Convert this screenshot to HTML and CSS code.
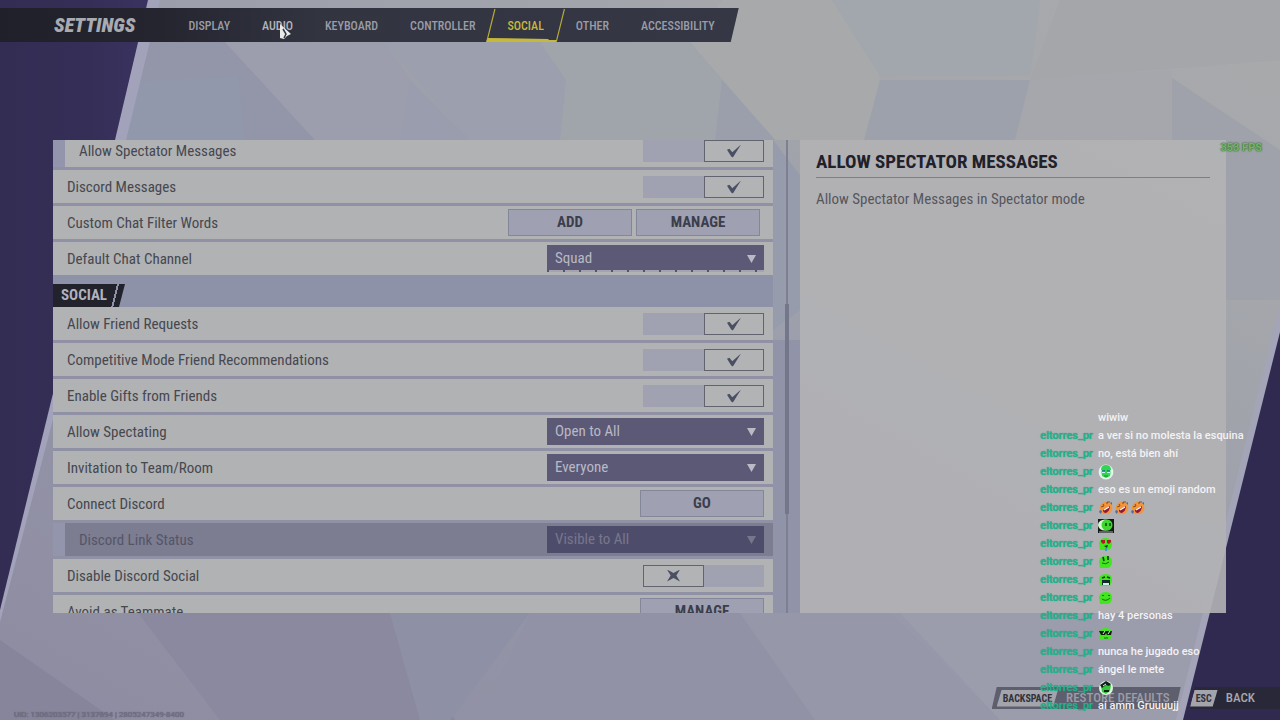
FILE: index.html
```html
<!DOCTYPE html>
<html lang="en">
<head>
<meta charset="utf-8">
<meta name="viewport" content="width=device-width, initial-scale=1">
<title>Settings - Social</title>
<link rel="stylesheet" href="styles.css">
</head>
<body>
<svg class="backdrop" viewBox="0 0 1280 720" preserveAspectRatio="none" aria-hidden="true">
  <defs>
    <linearGradient id="base" x1="0" y1="1" x2="1" y2="0">
      <stop offset="0" stop-color="#8d8ba1"/><stop offset=".45" stop-color="#989aab"/><stop offset=".8" stop-color="#a5a7ac"/><stop offset="1" stop-color="#a9aaab"/>
    </linearGradient>
    <linearGradient id="darkLeft" x1="0" y1="0" x2="1" y2="0">
      <stop offset="0" stop-color="#332d54"/><stop offset=".6" stop-color="#352f57"/><stop offset="1" stop-color="#3a3260"/>
    </linearGradient>
  </defs>
  <rect width="1280" height="720" fill="url(#base)"/>
  <path d="M138 42H225L315 140H125Z" fill="#9395a8"/>
  <path d="M133 82L238 76L245 140H120Z" fill="#9298ac"/>
  <path d="M225 42H385L450 140H315Z" fill="#9c9eae"/>
  <path d="M385 42H540L566 80L560 140H470Z" fill="#9b9fae"/>
  <path d="M410 80L400 140H470L440 110Z" fill="#9a9dae"/>
  <path d="M540 42H690L722 80L775 140H560L566 80Z" fill="#a0a4ab"/>
  <path d="M722 0H865L880 80L870 140H775L690 42Z" fill="#a7a9ab"/>
  <path d="M722 80L715 140H775Z" fill="#9b9fac"/>
  <path d="M832 0H1040L1030 76H880Z" fill="#a2a6ad"/>
  <path d="M880 80H1030L1015 140H864Z" fill="#9da1ab"/>
  <path d="M1060 0H1280V60L1030 80Z" fill="#a5a6aa"/>
  <path d="M1030 80L1172 70V140H1018Z" fill="#a5a7ad"/>
  <path d="M1172 78L1280 150V300H1226V140H1172Z" fill="#9fa2ab"/>
  <path d="M0 640L115 720H0Z" fill="#87859b"/>
  <path d="M138 613H390L455 720H220Z" fill="#8a899f"/>
  <path d="M390 613H530L450 720H420Z" fill="#8e90a5"/>
  <path d="M530 613H740L815 720H480Z" fill="#9192a6"/>
  <path d="M740 613H890L1000 720H815Z" fill="#9697a9"/>
  <path d="M900 613H1205L1185 720H1000Z" fill="#9c9dac"/>
  <path d="M773 140L800 175V310L773 330Z" fill="#979cac"/>
  <path d="M773 340H800V613H773Z" fill="#9194a9"/>
  <path d="M148 0H160L126 140L0 622V604Z" fill="#a3a2bb"/>
  <path d="M0 0H148L115 140L0 610Z" fill="url(#darkLeft)"/>
  <path d="M1280 305V340L1184 720H1176Z" fill="#a3a4b7"/>
  <path d="M1280 332V720H1183Z" fill="#302a50"/>
</svg>

<header class="topbar">
  <div class="topbar-plate">
    <h1 class="title">SETTINGS</h1>
    <nav class="tabs" aria-label="Settings sections">
      <a class="tab" href="#display">DISPLAY</a>
      <a class="tab tab-hover" href="#audio">AUDIO</a>
      <a class="tab" href="#keyboard">KEYBOARD</a>
      <a class="tab" href="#controller">CONTROLLER</a>
      <a class="tab tab-active" href="#social" aria-current="page">
        <svg class="tab-frame" viewBox="0 0 79 34" preserveAspectRatio="none" aria-hidden="true">
          <path d="M9 1L1 33H71L79 1" fill="none" stroke="#b5a938" stroke-width="1.2"/>
          <path d="M2 30L63 31V32H71V34H0Z" fill="#c5b83a"/>
        </svg>SOCIAL</a>
      <a class="tab" href="#other">OTHER</a>
      <a class="tab" href="#accessibility">ACCESSIBILITY</a>
    </nav>
  </div>
</header>

<main class="content">
  <form class="list">
    <div class="list-inner">
      <div class="group">
        <div class="row row-sub"><label for="spec">Allow Spectator Messages</label><input class="toggle" id="spec" type="checkbox" checked></div>
        <div class="row"><label for="discordMsg">Discord Messages</label><input class="toggle" id="discordMsg" type="checkbox" checked></div>
        <div class="row row-pair"><span>Custom Chat Filter Words</span><div class="pair"><button class="btn" type="button">ADD</button><button class="btn" type="button">MANAGE</button></div></div>
        <div class="row"><label for="channel">Default Chat Channel</label><div class="drop drop-ticks"><select id="channel"><option>Squad</option></select></div></div>
      </div>
      <div class="section"><h2 class="section-tag">SOCIAL</h2></div>
      <div class="group">
        <div class="row"><label for="friend">Allow Friend Requests</label><input class="toggle" id="friend" type="checkbox" checked></div>
        <div class="row"><label for="comp">Competitive Mode Friend Recommendations</label><input class="toggle" id="comp" type="checkbox" checked></div>
        <div class="row"><label for="gifts">Enable Gifts from Friends</label><input class="toggle" id="gifts" type="checkbox" checked></div>
        <div class="row"><label for="spectating">Allow Spectating</label><div class="drop"><select id="spectating"><option>Open to All</option></select></div></div>
        <div class="row"><label for="invite">Invitation to Team/Room</label><div class="drop"><select id="invite"><option>Everyone</option></select></div></div>
        <div class="row"><span>Connect Discord</span><button class="btn" type="button">GO</button></div>
        <div class="row row-sub row-disabled"><label for="link">Discord Link Status</label><div class="drop"><select id="link" disabled><option>Visible to All</option></select></div></div>
        <div class="row"><label for="disable">Disable Discord Social</label><input class="toggle" id="disable" type="checkbox"></div>
        <div class="row"><span>Avoid as Teammate</span><button class="btn" type="button">MANAGE</button></div>
      </div>
    </div>
  </form>
  <div class="scrollbar"><div class="scroll-thumb"></div></div>
  <section class="detail">
    <h2 class="detail-title">ALLOW SPECTATOR MESSAGES</h2>
    <p class="detail-text">Allow Spectator Messages in Spectator mode</p>
  </section>
</main>

<footer class="footer">
  <span class="uid">UID: 1306203577 | 3137694 | 2805247349-8400</span>
  <div class="actions">
    <button class="action" type="button"><kbd class="key">BACKSPACE</kbd><span>RESTORE DEFAULTS</span></button>
    <button class="action action-back" type="button"><kbd class="key">ESC</kbd><span>BACK</span></button>
  </div>
</footer>

<div class="fps">353 FPS</div>

<svg class="cursor" viewBox="0 0 13 16" aria-hidden="true">
  <path d="M1 0L12 10L8 12L5 15L1 14Z" fill="#e9e9ea"/>
  <path d="M4 5L7 10L5 14" fill="none" stroke="#333540" stroke-width="1.5"/>
</svg>

<svg class="sprites" aria-hidden="true">
  <symbol id="rofl" viewBox="0 0 16 16">
    <circle cx="8" cy="8" r="6.3" fill="#f2953a"/><path d="M5 10L12 6Q12 11 8 13Q5 13 5 10Z" fill="#8d1639"/><path d="M6 10L11 7" stroke="#fff" stroke-width="1.2"/><path d="M3 7L6 6L5 4M9 4L9 2L12 2" fill="none" stroke="#6b3a2c" stroke-width=".8"/><path d="M2 10L4 11L3 14L1 12ZM12 3L14 2L14 5Z" fill="#536aa6"/>
  </symbol>
  <symbol id="blob" viewBox="0 0 16 16"><path d="M2 14L1 7Q2 2 8 2Q14 2 14 8Q14 13 10 14Z" fill="#43e51f"/></symbol>
</svg>

<aside class="chat" aria-label="Chat">
  <p class="msg"><span class="user"></span><span>wiwiw</span></p>
  <p class="msg"><span class="user">eltorres_pr</span><span>a ver si no molesta la esquina</span></p>
  <p class="msg"><span class="user">eltorres_pr</span><span>no, está bien ahí</span></p>
  <p class="msg"><span class="user">eltorres_pr</span><svg class="emote" viewBox="0 0 16 16"><circle cx="8" cy="8" r="7.4" fill="#e2f8e8"/><path d="M3 6Q3 1 8 1Q13 1 13 6L12 12L8 14L4 12Z" fill="#32d64c"/><path d="M3 6L7 7V9L4 9ZM9 7L13 6L12 9H9Z" fill="#c9f4ff"/><path d="M4 7H7M9 7H12" stroke="#166c82" stroke-width="1.5"/><path d="M6 12H10" stroke="#168631"/></svg></p>
  <p class="msg"><span class="user">eltorres_pr</span><span>eso es un emoji random</span></p>
  <p class="msg"><span class="user">eltorres_pr</span><svg class="emote"><use href="#rofl"/></svg><svg class="emote"><use href="#rofl"/></svg><svg class="emote"><use href="#rofl"/></svg></p>
  <p class="msg"><span class="user">eltorres_pr</span><svg class="emote" viewBox="0 0 16 16"><path d="M0 1H16V15H0Z" fill="#111816"/><ellipse cx="7" cy="7" rx="7" ry="5.5" fill="#d9f7d5"/><ellipse cx="9" cy="7" rx="5.5" ry="5.5" fill="#40d530"/><path d="M8 5V8M12 5V8" stroke="#102712" stroke-width="1.3"/><path d="M1 14H15" stroke="#a9b0a9"/></svg></p>
  <p class="msg"><span class="user">eltorres_pr</span><svg class="emote"><use href="#blob"/><path d="M3 4H7V7L5 8L3 6ZM9 4H13V6L11 8L9 7Z" fill="#b01a27"/><path d="M6 10L10 9L9 12Z" fill="#173c18"/><path d="M8 12V15" stroke="#3b9dca" stroke-width="2"/></svg></p>
  <p class="msg"><span class="user">eltorres_pr</span><svg class="emote"><use href="#blob"/><path d="M5 3L6 7M10 2V6" stroke="#163218" stroke-width="1.6"/><path d="M4 9Q8 11 11 8" fill="none" stroke="#20611b"/></svg></p>
  <p class="msg"><span class="user">eltorres_pr</span><svg class="emote"><use href="#blob"/><path d="M4 6L7 5M9 5L12 6" stroke="#163218" stroke-width="1.5"/><path d="M4 8H12V13H4Z" fill="#152a2c"/><path d="M5 12H11" stroke="#c7f3e3" stroke-width="2"/></svg></p>
  <p class="msg"><span class="user">eltorres_pr</span><svg class="emote"><use href="#blob"/><path d="M4 6L5 5L6 6M10 6L11 5L12 6M4 9Q8 12 12 8" fill="none" stroke="#19691a"/></svg></p>
  <p class="msg"><span class="user">eltorres_pr</span><span>hay 4 personas</span></p>
  <p class="msg"><span class="user">eltorres_pr</span><svg class="emote"><use href="#blob"/><path d="M1 5H14L13 9H9L8 7L7 9H3Z" fill="#101810"/><path d="M5 8L7 5M10 8L12 5" stroke="#d8efd9"/><path d="M6 12H10" stroke="#19691a"/></svg></p>
  <p class="msg"><span class="user">eltorres_pr</span><span>nunca he jugado eso</span></p>
  <p class="msg"><span class="user">eltorres_pr</span><span>ángel le mete</span></p>
  <p class="msg"><span class="user">eltorres_pr</span><svg class="emote" viewBox="0 0 16 16"><circle cx="8" cy="8" r="7" fill="#dff6df"/><path d="M3 6L9 2L13 5L12 11L8 14L4 12Z" fill="#32c83c"/><path d="M2 5L8 1L13 4L11 6L8 5L4 8ZM6 10H11V12H6Z" fill="#12221a"/><path d="M5 6L8 4" stroke="#e6f8e9"/></svg></p>
  <p class="msg"><span class="user">eltorres_pr</span><span>ai amm Gruuuujj</span></p>
</aside>
</body>
</html>
```
FILE: styles.css
```css
* { box-sizing: border-box; }

body {
  margin: 0;
  height: 100vh;
  display: flex;
  flex-direction: column;
  position: relative;
  overflow: hidden;
  background: #9798a9;
  color: #46474f;
  font: 15px/20px "Roboto Condensed", Roboto, sans-serif;
}

h1, h2, p { margin: 0; }

.backdrop {
  position: absolute;
  inset: 0;
  width: 100%;
  height: 100%;
  z-index: -1;
}

/* Top bar */
.topbar { padding-top: 8px; display: flex; flex: none; }

.topbar-plate {
  display: flex;
  align-items: center;
  height: 34px;
  padding: 0 8px 0 54px;
  gap: 37px;
  background: linear-gradient(90deg, #20202b 0, #24252f 160px, #323440 320px, #353745 100%);
  clip-path: polygon(0 0, 100% 0, calc(100% - 8px) 100%, 0 100%);
}

.title {
  color: #a9abb2;
  font: italic 900 20px/34px "Roboto Condensed", Roboto, sans-serif;
}

.tabs { display: flex; height: 34px; }

.tab {
  position: relative;
  padding: 0 16px;
  color: #9a9ca6;
  text-decoration: none;
  font: 500 12px/36px "Roboto Condensed", Roboto, sans-serif;
}

.tab-hover { color: #b3b4ba; }
.tab-active { color: #c5b83a; }

.tab-frame {
  position: absolute;
  top: 0;
  left: -5px;
  width: calc(100% + 10px);
  height: 100%;
}

/* Settings list */
.content {
  flex: 1;
  min-height: 0;
  display: grid;
  grid-template-columns: 720fr 27fr 426fr;
  grid-template-rows: 100%;
  margin: 98px 54px 0 53px;
}

.list { min-width: 0; overflow: hidden; }
.list-inner { margin-top: -6px; }

.group {
  display: flex;
  flex-direction: column;
  gap: 3px;
  background: #9091a5;
}

.row {
  display: flex;
  align-items: center;
  justify-content: space-between;
  height: 33px;
  padding: 0 9px 0 14px;
  background: #b0b2b4;
}

.row-pair { padding-right: 13px; }
.row-sub { border-left: 12px solid #9395ac; }
.row-disabled { background: #7c7d90; color: #555568; }
.pair { display: flex; gap: 4px; }

.toggle {
  appearance: none;
  position: relative;
  width: 121px;
  height: 22px;
  margin: 0;
  background: #a0a1b1;
}

.toggle::before {
  content: "";
  position: absolute;
  inset: 0 50% 0 0;
  border: 1px solid #61636f;
  background: #b2b3b5;
}

.toggle:checked::before { inset: 0 0 0 50%; }

.toggle::after {
  content: "";
  position: absolute;
  left: 24px;
  top: 5px;
  width: 13px;
  height: 12px;
  background: #4a4f64;
  clip-path: polygon(0 0, 50% 30%, 100% 0, 72% 50%, 100% 100%, 50% 70%, 0 100%, 28% 50%);
}

.toggle:checked::after {
  left: 84px;
  width: 14px;
  height: 13px;
  clip-path: polygon(0 40%, 17% 32%, 38% 60%, 100% 0, 42% 100%, 30% 92%);
}

.btn {
  width: 124px;
  height: 27px;
  padding: 0;
  border: 1px solid #84869a;
  background: #9fa1b2;
  color: #3b3e4b;
  font: bold 15px/25px "Roboto Condensed", Roboto, sans-serif;
}

.drop { position: relative; width: 217px; height: 27px; }

.drop select {
  appearance: none;
  width: 100%;
  height: 100%;
  padding: 0 8px;
  border: 0;
  border-radius: 0;
  background: #5b5976;
  color: #b9bac6;
  font: 15px/27px "Roboto Condensed", Roboto, sans-serif;
}

.drop::after {
  content: "";
  position: absolute;
  right: 8px;
  top: 10px;
  width: 9px;
  height: 8px;
  background: #b9bac6;
  clip-path: polygon(0 0, 100% 0, 50% 100%);
}

.drop select:disabled { background: #4e4c6b; color: #77778c; opacity: 1; }
.row-disabled .drop::after { background: #77778c; }

.drop-ticks select {
  background: repeating-linear-gradient(90deg, #55536f 0 2px, #a3a4af 2px 16px) bottom / 100% 2px no-repeat, #5b5976;
}

.section {
  display: flex;
  align-items: flex-end;
  height: 32px;
  background: #8d92a8;
}

.section-tag {
  width: 72px;
  height: 23px;
  padding-left: 8px;
  background: linear-gradient(104deg, #22222d 0 62px, #8d92a8 62px 64px, #22222d 64px);
  clip-path: polygon(0 0, 100% 0, calc(100% - 6px) 100%, 0 100%);
  color: #b2b3bd;
  font: bold 15px/23px "Roboto Condensed", Roboto, sans-serif;
}

.scrollbar {
  display: flex;
  justify-content: center;
  background: linear-gradient(#7e8091, #7e8091) center / 2px 100% no-repeat;
}

.scroll-thumb { width: 4px; height: 210px; margin-top: 164px; background: #74778a; }

/* Description panel */
.detail {
  min-width: 0;
  padding: 10px 16px;
  background: rgba(178, 179, 181, 0.9);
}

.detail-title {
  padding-bottom: 3px;
  border-bottom: 1px solid #7e7f85;
  color: #20212b;
  font: bold 19px/24px "Roboto Condensed", Roboto, sans-serif;
}

.detail-text { padding-top: 11px; color: #55565d; }

/* Footer */
.footer {
  flex: none;
  height: 107px;
  display: flex;
  justify-content: space-between;
  align-items: flex-end;
  padding-left: 14px;
}

.uid {
  color: #777588;
  font: 8px/10px Roboto, sans-serif;
  text-shadow: 0 0 1px #444356;
}

.actions { display: flex; gap: 9px; padding-bottom: 11px; }

.action {
  display: flex;
  align-items: center;
  gap: 8px;
  height: 22px;
  padding: 0 11px 0 5px;
  border: 0;
  background: rgba(54, 54, 68, 0.6);
  clip-path: polygon(5px 0, 100% 0, calc(100% - 5px) 100%, 0 100%);
  color: #9c9da6;
  font: 500 13px/22px "Roboto Condensed", Roboto, sans-serif;
}

.action-back {
  padding: 0 25px 0 0;
  background: #292838;
  clip-path: polygon(5px 0, 100% 0, 100% 100%, 0 100%);
  color: #a5a6ae;
}

.key {
  padding: 0 6px;
  background: #a3a4ac;
  clip-path: polygon(5px 0, 100% 0, calc(100% - 5px) 100%, 0 100%);
  color: #30313b;
  font: bold 10px/17px "Roboto Condensed", Roboto, sans-serif;
}

/* Overlays */
.fps {
  position: absolute;
  right: 18px;
  top: 140px;
  color: #77b56c;
  font: bold 11px/16px Roboto, sans-serif;
  text-shadow: 0 0 2px #2f6a2c, 0 0 1px #2f6a2c;
}

.cursor {
  position: absolute;
  left: 279px;
  top: 24px;
  width: 13px;
  height: 16px;
}

.sprites { position: absolute; width: 0; height: 0; }

.chat {
  position: absolute;
  right: 33px;
  bottom: 5px;
  min-width: 209px;
  color: #f3f3f4;
  font: 500 11px/18px Roboto, sans-serif;
}

.msg { display: flex; align-items: center; height: 18px; white-space: nowrap; }

.user {
  width: 55px;
  margin-right: 5px;
  text-align: right;
  color: #25b28b;
  text-shadow: 0 0 1px #12a078;
}

.emote { width: 16px; height: 16px; }
```
